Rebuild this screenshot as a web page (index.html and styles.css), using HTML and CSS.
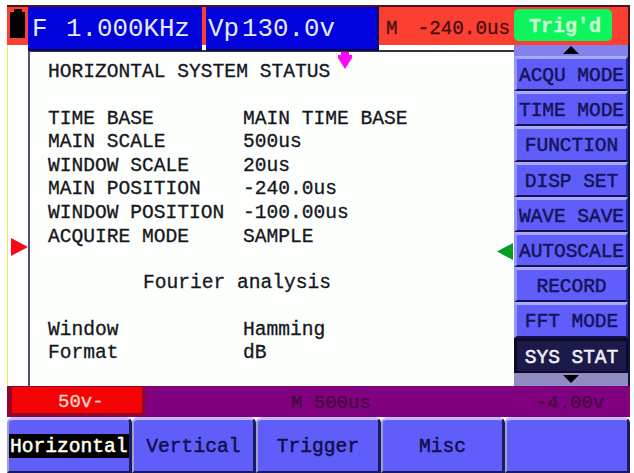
FILE: index.html
```
<!DOCTYPE html>
<html lang="en">
<head>
  <meta charset="UTF-8">
  <title>Horizontal System Status</title>
  <link rel="stylesheet" href="styles.css">
</head>
<body>
  <div class="scope">

    <header class="topbar">
      <div class="battery">
        <svg width="18" height="30" viewBox="0 0 18 30"><path d="M5 0h8v3h3v26H1V3h4z"/></svg>
      </div>
      <div class="measure freq"><span class="name">F</span><span>1.000KHz</span></div>
      <div class="measure volt"><span class="name">Vp</span><span>130.0v</span></div>
      <div class="mpos"><span>M</span><span>-240.0us</span></div>
      <div class="trig">Trig'd</div>
    </header>

    <div class="middle">
      <div class="gutter">
        <svg class="ch-mark" width="17" height="18" viewBox="0 0 17 18"><path d="M0 0L17 9L0 18z"/></svg>
      </div>

      <main class="plot">
        <svg class="pos-mark" width="14" height="17" viewBox="0 0 14 17"><path d="M3 0h8v3h3v3L7 17L0 6V3h3z"/></svg>
        <svg class="trig-mark" width="16" height="17" viewBox="0 0 16 17"><path d="M16 0v17L0 8.5z"/></svg>
        <h1>HORIZONTAL SYSTEM STATUS</h1>
        <dl class="status">
          <dt>TIME BASE</dt><dd>MAIN TIME BASE</dd>
          <dt>MAIN SCALE</dt><dd>500us</dd>
          <dt>WINDOW SCALE</dt><dd>20us</dd>
          <dt>MAIN POSITION</dt><dd>-240.0us</dd>
          <dt>WINDOW POSITION</dt><dd>-100.00us</dd>
          <dt>ACQUIRE MODE</dt><dd>SAMPLE</dd>
        </dl>
        <h2>Fourier analysis</h2>
        <dl class="status">
          <dt>Window</dt><dd>Hamming</dd>
          <dt>Format</dt><dd>dB</dd>
        </dl>
      </main>

      <nav class="side">
        <div class="arrow"><svg width="16" height="8" viewBox="0 0 16 8"><path d="M8 0L16 8H0z"/></svg></div>
        <div class="item">ACQU MODE</div>
        <div class="item">TIME MODE</div>
        <div class="item">FUNCTION</div>
        <div class="item">DISP SET</div>
        <div class="item">WAVE SAVE</div>
        <div class="item">AUTOSCALE</div>
        <div class="item">RECORD</div>
        <div class="item">FFT MODE</div>
        <div class="item active">SYS STAT</div>
        <div class="arrow down"><svg width="16" height="8" viewBox="0 0 16 8"><path d="M0 0H16L8 8z"/></svg></div>
      </nav>
    </div>

    <div class="infobar">
      <div class="ch">50v-</div>
      <div class="mbase">M 500us</div>
      <div class="level">-4.00v</div>
    </div>

    <footer class="tabs">
      <div class="tab"><span class="selected">Horizontal</span></div>
      <div class="tab">Vertical</div>
      <div class="tab">Trigger</div>
      <div class="tab">Misc</div>
      <div class="tab"></div>
    </footer>

  </div>
</body>
</html>
```
FILE: styles.css
```
* {
  box-sizing: border-box;
}
body {
  margin: 0;
  padding: 5px 4px 0 7px;
  height: 473px;
  overflow: hidden;
  background: #fff;
  font-family: "Liberation Mono", monospace;
  font-size: 19.6px;
  color: #16161e;
  -webkit-text-stroke: 0.3px;
}
.scope {
  width: 623px;
  height: 468px;
  display: flex;
  flex-direction: column;
}

/* top bar */
.topbar {
  height: 40px;
  display: flex;
  flex: none;
  background: #fb4032;
  border-top: 2px solid #48161c;
  border-right: 2px solid #48161c;
  position: relative;
  z-index: 1;
}
.battery {
  width: 21px;
  padding: 2px 0 0 2px;
}
.measure {
  height: 44px;
  display: flex;
  align-items: center;
  background: #0202dc;
  border-bottom: 2px solid #0a0a50;
  color: #e2eafc;
  font-size: 25.8px;
  -webkit-text-stroke: 0;
}
.freq {
  width: 174px;
  padding: 2px 0 0 4px;
  margin-right: 4px;
}
.freq .name {
  width: 34px;
}
.volt {
  width: 173px;
  padding: 2px 0 0 2px;
  border-right: 2px solid #0a0a50;
}
.volt .name {
  width: 34px;
}
.mpos {
  width: 135px;
  padding: 11px 0 0 7px;
  display: flex;
  gap: 20px;
  color: #4a0c10;
  font-size: 19.3px;
}
.trig {
  width: 98px;
  height: 32px;
  margin-top: 2px;
  padding-left: 15px;
  line-height: 36px;
  background: #0cf55e;
  border-radius: 5px;
  color: #ccffd2;
  font-size: 20px;
  font-weight: bold;
}

/* plot and side menu */
.middle {
  height: 341px;
  display: flex;
  flex: none;
}
.gutter {
  width: 21px;
  padding: 193px 0 0 3px;
  border-left: 1px solid #eeee50;
}
.ch-mark {
  fill: #f80818;
}
.plot {
  width: 486px;
  margin-top: 5px;
  padding: 9px 0 0 18px;
  border-left: 2px solid #554c80;
  border-top: 2px solid #34343a;
  background: #fcfffc;
  position: relative;
}
.plot h1, .plot h2, .status {
  margin: 0;
  font-size: 19.6px;
  font-weight: normal;
  line-height: 23.6px;
}
.plot h2 {
  margin: 23px 0 23px 95px;
}
.status {
  display: grid;
  grid-template-columns: 195px 1fr;
}
h1 + .status {
  margin-top: 23px;
}
.status dd {
  margin: 0;
}
.pos-mark {
  position: absolute;
  left: 308px;
  top: 0;
  fill: #fc08fc;
}
.trig-mark {
  position: absolute;
  right: 1px;
  top: 191px;
  fill: #0a9c22;
}
.side {
  width: 116px;
  background: #8480ec;
  border-right: 2px solid #101048;
}
.arrow {
  height: 11px;
  display: flex;
  justify-content: center;
  align-items: flex-end;
  padding-bottom: 2px;
}
.arrow.down {
  height: 13px;
  align-items: flex-start;
  padding-top: 2px;
  background: #8e8cc0;
}
.item {
  height: 35.2px;
  line-height: 34px;
  text-align: center;
  white-space: nowrap;
  background: #605efa;
  border-top: 3px solid #a9a9fc;
  border-left: 3px solid #9694f8;
  border-right: 2px solid #2c2a9a;
  border-bottom: 2px solid #14124e;
  color: #14145a;
  letter-spacing: -0.1px;
  -webkit-text-stroke: 0.5px;
}
.item.active {
  background: #1c1a48;
  border-color: #0c0a28;
  color: #f0f0fa;
}

/* channel / timebase strip */
.infobar {
  height: 31px;
  display: flex;
  flex: none;
  background: #800080;
  line-height: 34px;
  color: #43083f;
  font-size: 19px;
}
.ch {
  width: 138px;
  height: 30px;
  padding-left: 46px;
  background: #f40404;
  border: solid #980428;
  border-width: 1px 3px 3px 5px;
  border-radius: 4px;
  line-height: 31px;
  color: #ffd6cc;
}
.mbase {
  margin-left: 146px;
}
.level {
  margin-left: 165px;
}

/* bottom tabs */
.tabs {
  flex: 1;
  display: flex;
  background: #fff;
}
.tab {
  width: 124.8px;
  padding-top: 16px;
  text-align: center;
  background: #605efa;
  border-top: 3px solid #c8bcfa;
  border-left: 2px solid #a2a0c8;
  border-right: 3px solid #1c1a60;
  border-bottom: 2px solid #1c1a60;
  border-radius: 6px 6px 0 0;
  color: #10104e;
  -webkit-text-stroke: 0.5px;
}
.selected {
  display: block;
  height: 24px;
  margin-top: -2px;
  line-height: 26px;
  background: #000;
  color: #fffff0;
}
```
